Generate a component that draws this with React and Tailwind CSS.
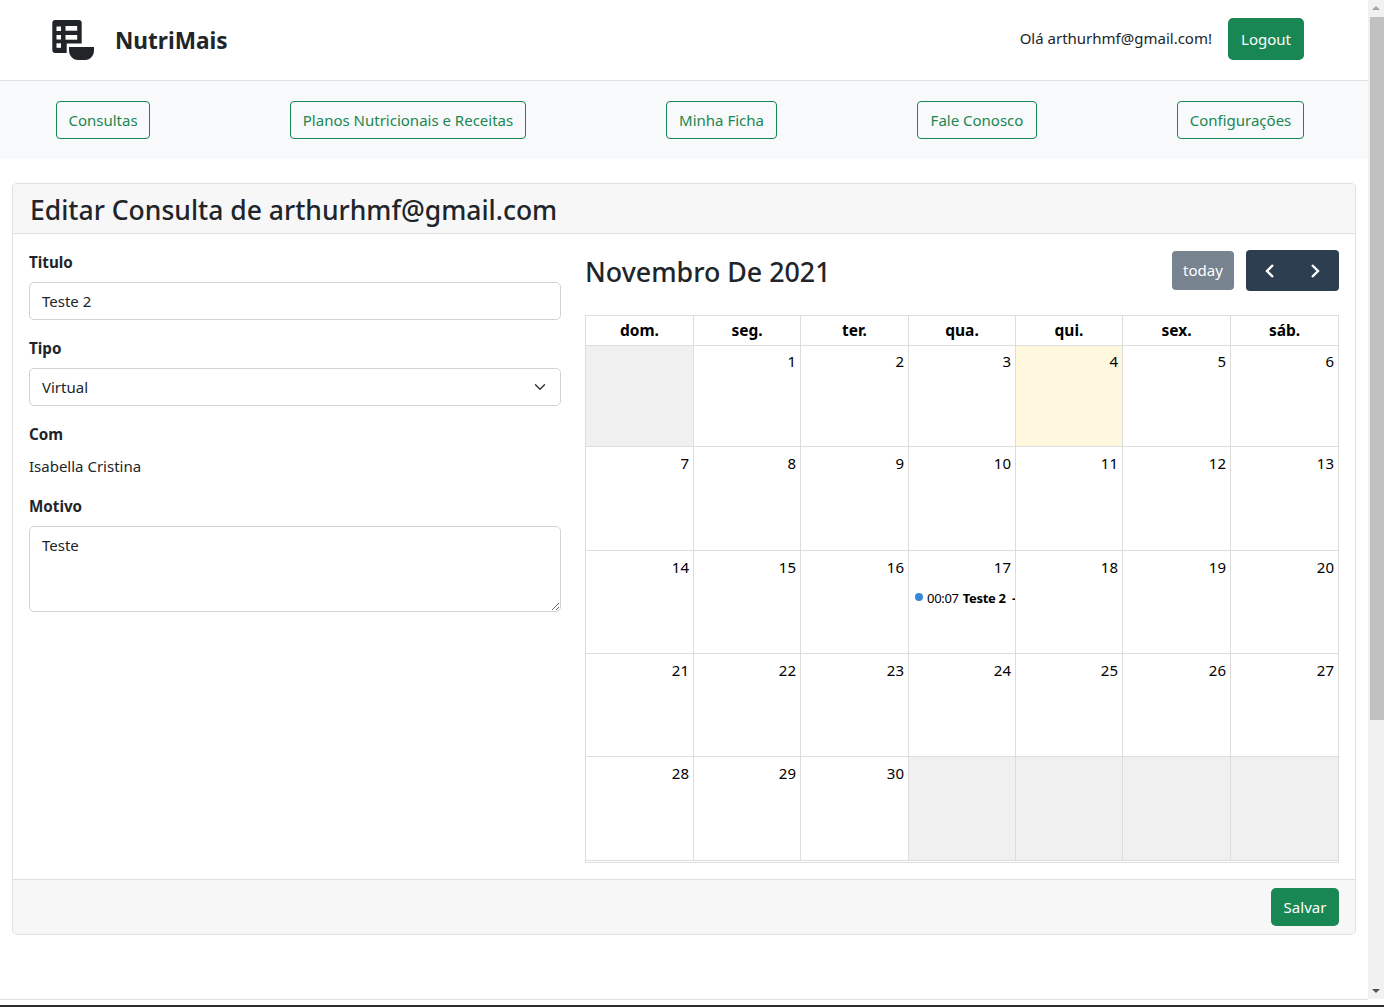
import React from "react";

function Logo() {
  return (
    <svg width="42" height="40" viewBox="0 0 42 40" className="shrink-0">
      <rect x="0.3" y="0" width="29.4" height="33" rx="3" fill="#212529" />
      <rect x="4.5" y="6.5" width="4.5" height="4.5" fill="#fff" />
      <rect x="4.500" y="15" width="4.5" height="4.5" fill="#fff" />
      <rect x="4.5" y="23.3" width="4.5" height="4.5" fill="#fff" />
      <rect x="13.5" y="6" width="11.7" height="4.7" fill="#fff" />
      <rect x="13.5" y="15" width="11.7" height="4.7" fill="#fff" />
      <rect x="14.7" y="23.5" width="27.3" height="16.5" fill="#fff" />
      <path d="M17 27H42V30C42 35.5 38.5 40 33 40H26C20.5 40 17 35.5 17 30Z" fill="#212529" />
    </svg>
  );
}

const navItems = [
  ["Consultas", "w-[94px]"],
  ["Planos Nutricionais e Receitas", "w-[236px]"],
  ["Minha Ficha", "w-[111px]"],
  ["Fale Conosco", "w-[120px]"],
  ["Configurações", "w-[127px]"],
];

const weekDays = ["dom.", "seg.", "ter.", "qua.", "qui.", "sex.", "sáb."];

const weeks = [
  { h: "h-[101px]", pt: "pt-[3px]", days: [null, 1, 2, 3, 4, 5, 6] },
  { h: "h-[104px]", pt: "pt-1", days: [7, 8, 9, 10, 11, 12, 13] },
  { h: "h-[103px]", pt: "pt-1", days: [14, 15, 16, 17, 18, 19, 20] },
  { h: "h-[103px]", pt: "pt-1", days: [21, 22, 23, 24, 25, 26, 27] },
  { h: "h-[104px]", pt: "pt-1", days: [28, 29, 30, null, null, null, null] },
];

const cols = "grid grid-cols-[108px_107px_108px_107px_107px_108px_108px]";

function Calendar() {
  return (
    <div className="w-[754px] border-t border-l border-[#ddd] mt-6">
      <div className={`${cols} h-[30px]`}>
        {weekDays.map((d) => (
          <div key={d} className="border-r border-b border-[#ddd] text-center font-bold text-black text-[15.5px] leading-[29px]">
            {d}
          </div>
        ))}
      </div>
      {weeks.map((w, i) => (
        <div key={i} className={`${cols} ${w.h}`}>
          {w.days.map((d, j) => (
            <div
              key={j}
              className={`border-r border-b border-[#ddd] min-w-0 overflow-hidden ${d === null ? "bg-[#f0f0f0]" : d === 4 ? "bg-[#fff8de]" : "bg-white"}`}
            >
              {d !== null && <div className={`text-right pr-1 ${w.pt} text-[15px] leading-6 text-black`}>{d}</div>}
              {d === 17 && (
                <div className="flex items-center mt-[9px] pl-1.5 text-[13px] leading-5 text-black whitespace-nowrap overflow-hidden tracking-[-0.3px]">
                  <span className="w-2 h-2 rounded-full bg-[#3788d8] mr-1 shrink-0 -mt-0.5" />
                  <span className="mr-1">00:07</span>
                  <span className="font-bold">Teste 2&nbsp; - Virtual</span>
                </div>
              )}
            </div>
          ))}
        </div>
      ))}
      <div className="h-0.5 border-b border-r border-[#ddd]" />
    </div>
  );
}

export default function App() {
  return (
    <div className="h-[1007px] flex flex-col overflow-hidden bg-white text-[#212529] font-['Noto_Sans','Open_Sans',sans-serif] text-[15px]">
      <div className="flex flex-1 min-h-0">
        <div className="w-[1368px] flex flex-col">
          <header className="h-[81px] border-b border-[#dee2e6] flex items-center pl-[52px] pr-16">
            <Logo />
            <span className="ml-[21px] text-[22.6px] font-bold mt-0.5">NutriMais</span>
            <span className="ml-auto mr-4 -mt-1">Olá arthurhmf@gmail.com!</span>
            <button className="w-[76px] h-[42px] bg-[#198754] text-white rounded-[5px] mb-0.5">Logout</button>
          </header>
          <nav className="h-[78px] bg-[#f8f9fa] flex items-center justify-between pl-14 pr-16">
            {navItems.map(([t, w]) => (
              <button key={t} className={`${w} h-[38px] border border-[#198754] text-[#198754] rounded-[4px] whitespace-nowrap`}>
                {t}
              </button>
            ))}
          </nav>
          <section className="mx-3 mt-6 border border-[#dfdfdf] rounded-[5px] overflow-hidden">
            <div className="h-[50px] bg-[#f7f7f7] border-b border-[#dfdfdf] pl-[17px] text-[26.5px] font-medium leading-[52px]">
              Editar Consulta de arthurhmf@gmail.com
            </div>
            <div className="h-[645px] flex px-4 gap-6">
              <form className="w-[532px] pt-[15px] shrink-0">
                <label className="block font-bold text-[15.2px] leading-[26px] h-[33px]">Titulo</label>
                <input
                  defaultValue="Teste 2"
                  className="w-full h-[38px] border border-[#ced4da] rounded-[5px] px-3 outline-none"
                />
                <label className="block font-bold text-[15.2px] leading-[26px] h-[33px] mt-[15px]">Tipo</label>
                <div className="relative">
                  <select defaultValue="Virtual" className="w-full h-[38px] border border-[#ced4da] rounded-[5px] px-3 appearance-none bg-white outline-none">
                    <option>Virtual</option>
                  </select>
                  <svg width="16" height="16" viewBox="0 0 16 16" className="absolute right-[13px] top-[11px]">
                    <path d="M2 5l6 6 6-6" fill="none" stroke="#343a40" strokeWidth="2" strokeLinecap="round" strokeLinejoin="round" transform="translate(2 2) scale(.75)" />
                  </svg>
                </div>
                <label className="block font-bold text-[15.2px] leading-[26px] h-[33px] mt-[15px]">Com</label>
                <p className="leading-6 h-6">Isabella Cristina</p>
                <label className="block font-bold text-[15.2px] leading-[26px] h-[33px] mt-[15px]">Motivo</label>
                <textarea
                  defaultValue="Teste"
                  className="block w-full h-[86px] border border-[#ced4da] rounded-[5px] px-3 py-[7px] outline-none"
                />
              </form>
              <div className="w-[754px] pt-4">
                <div className="flex items-center justify-between h-[41px]">
                  <h2 className="text-[26.8px] font-medium leading-[44px] mt-0.5">Novembro De 2021</h2>
                  <div className="flex items-center">
                    <button className="w-[62px] h-[39px] rounded-[4px] bg-[#77838f] text-white">today</button>
                    <div className="ml-3 w-[93px] h-[41px] rounded-[4px] bg-[#2c3e50] text-white flex items-center">
                      <svg width="46" height="41" viewBox="0 0 46 41">
                        <path d="M27 15l-6 6 6 6" fill="none" stroke="#fff" strokeWidth="2.4" />
                      </svg>
                      <svg width="47" height="41" viewBox="0 0 47 41">
                        <path d="M20 15l6 6-6 6" fill="none" stroke="#fff" strokeWidth="2.4" />
                      </svg>
                    </div>
                  </div>
                </div>
                <Calendar />
              </div>
            </div>
            <div className="h-[55px] bg-[#f7f7f7] border-t border-[#dfdfdf] flex items-center justify-end pr-4">
              <button className="w-[68px] h-[38px] bg-[#198754] text-white rounded-[5px]">Salvar</button>
            </div>
          </section>
        </div>
        <aside className="w-4 bg-[#f1f1f1] flex flex-col">
          <svg width="16" height="17" viewBox="0 0 16 17" className="shrink-0">
            <path d="M4 10l4-4 4 4z" fill="#a3a3a3" />
          </svg>
          <div className="ml-0.5 w-[14px] h-[703px] bg-[#c1c1c1] shrink-0" />
          <div className="flex-1" />
          <svg width="16" height="17" viewBox="0 0 16 17" className="shrink-0">
            <path d="M4 7l4 4 4-4z" fill="#505050" />
          </svg>
        </aside>
      </div>
      <div className="w-[1368px] border-t border-[#dee2e6] h-[6px]" />
      <div className="h-[2px] bg-[#2b2b2b]" />
    </div>
  );
}
